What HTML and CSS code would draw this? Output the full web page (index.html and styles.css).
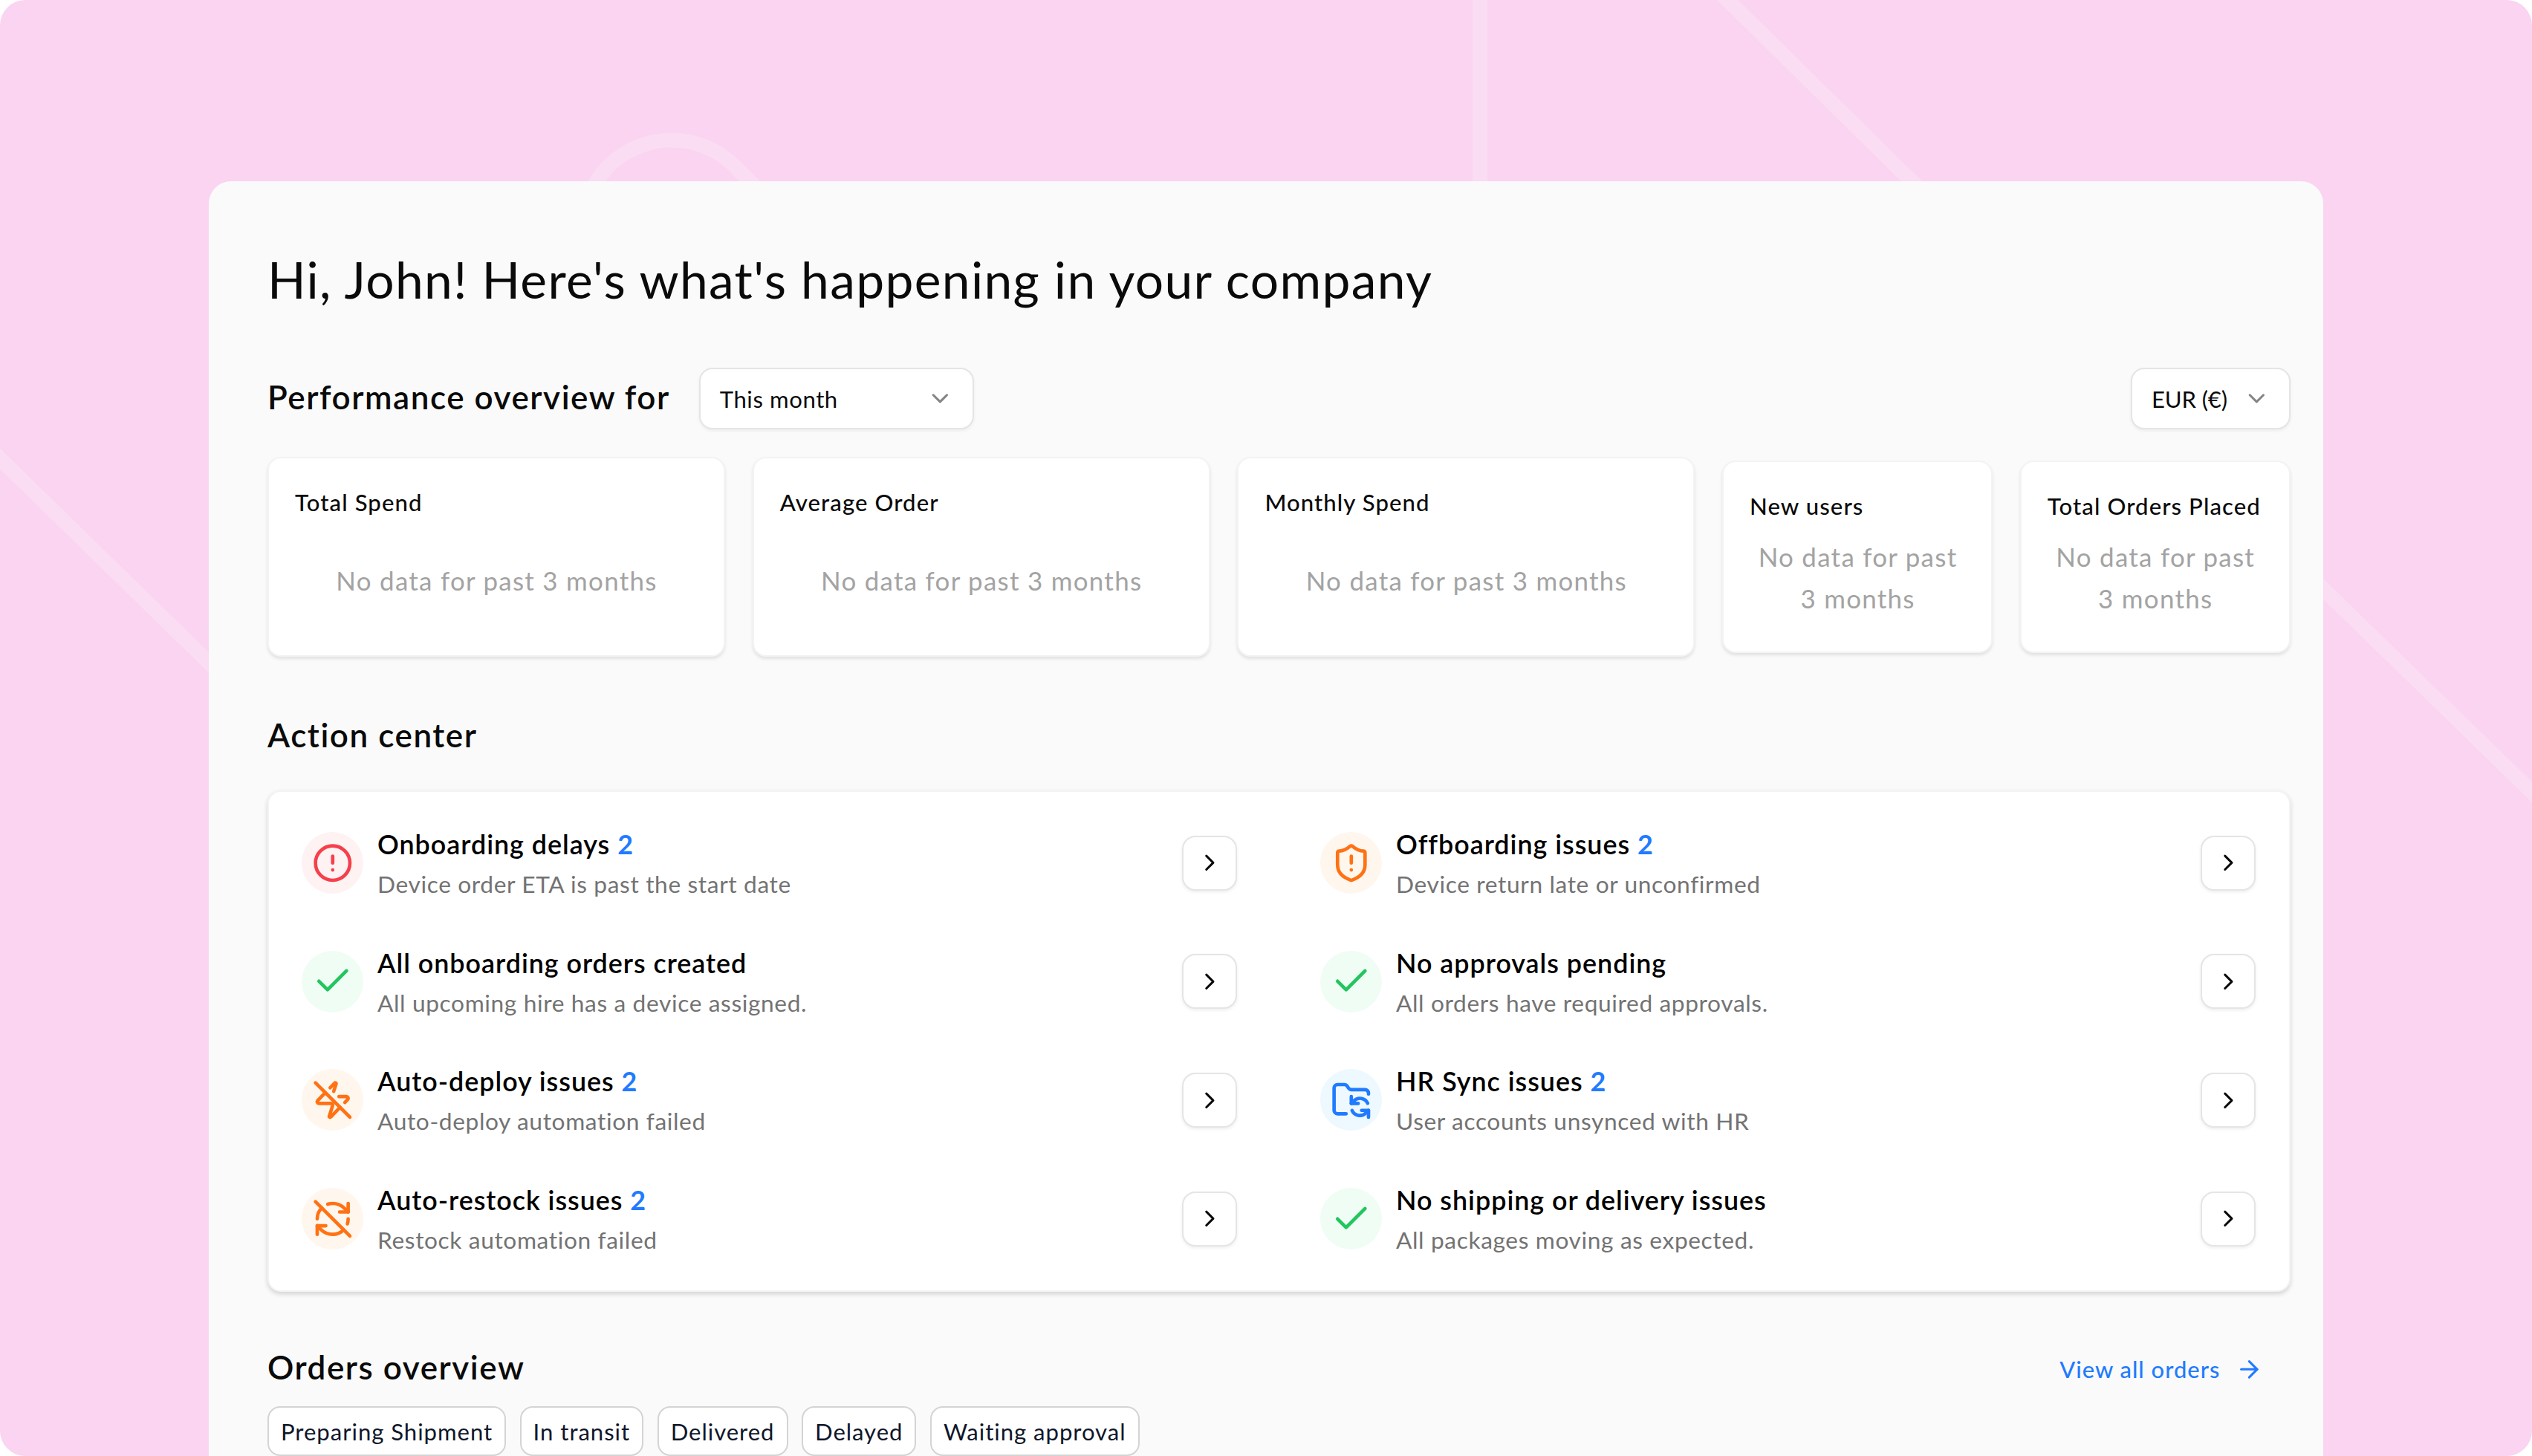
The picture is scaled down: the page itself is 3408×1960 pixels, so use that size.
FILE: index.html
```
<!DOCTYPE html>
<html lang="en">
<head>
  <meta charset="UTF-8">
  <meta name="viewport" content="width=device-width, initial-scale=1.0">
  <title>Company overview</title>
  <link rel="stylesheet" href="styles.css">
</head>
<body>

<!-- shared icons -->
<svg class="sprite" xmlns="http://www.w3.org/2000/svg">
  <symbol id="chevron-down" viewBox="0 0 24 24"><path d="m6 9 6 6 6-6"/></symbol>
  <symbol id="chevron-right" viewBox="0 0 24 24"><path d="m9 18 6-6-6-6"/></symbol>
  <symbol id="arrow-right" viewBox="0 0 24 24"><path d="M5 12h14"/><path d="m12 5 7 7-7 7"/></symbol>
  <symbol id="check" viewBox="0 0 24 24"><path d="M20 6 9 17l-5-5"/></symbol>
  <symbol id="alert" viewBox="0 0 24 24"><circle cx="12" cy="12" r="10"/><path d="M12 8v4"/><path d="M12 16h.01"/></symbol>
  <symbol id="shield" viewBox="0 0 24 24"><path d="M20 13c0 5-3.5 7.5-7.66 8.95a1 1 0 0 1-.67-.01C7.5 20.5 4 18 4 13V6a1 1 0 0 1 1-1c2 0 4.5-1.2 6.24-2.72a1.17 1.17 0 0 1 1.52 0C14.51 3.81 17 5 19 5a1 1 0 0 1 1 1z"/><path d="M12 8v4"/><path d="M12 16h.01"/></symbol>
  <symbol id="zap-off" viewBox="0 0 24 24"><path d="M10.513 4.856 13.12 2.17a.5.5 0 0 1 .86.46l-1.377 4.317"/><path d="M15.656 10H20a1 1 0 0 1 .78 1.63l-1.72 1.773"/><path d="M16.273 16.273 10.88 21.83a.5.5 0 0 1-.86-.46l1.92-6.02A1 1 0 0 0 11 14H4a1 1 0 0 1-.78-1.63l4.507-4.643"/><path d="m2 2 20 20"/></symbol>
  <symbol id="refresh-off" viewBox="0 0 24 24"><path d="M21 8 18.74 5.74A9.75 9.75 0 0 0 12 3C11 3 10.03 3.16 9.13 3.47"/><path d="M8 16H3v5"/><path d="M3 12C3 9.51 4 7.26 5.64 5.64"/><path d="m3 16 2.26 2.26A9.75 9.75 0 0 0 12 21c2.49 0 4.74-1 6.36-2.64"/><path d="M21 12c0 1-.16 1.97-.47 2.87"/><path d="M21 3v5h-5"/><path d="M22 22 2 2"/></symbol>
  <symbol id="folder-sync" viewBox="0 0 24 24"><path d="M9 20H4a2 2 0 0 1-2-2V5a2 2 0 0 1 2-2h3.9a2 2 0 0 1 1.69.9l.81 1.2a2 2 0 0 0 1.67.9H20a2 2 0 0 1 2 2v.5"/><path d="M12 10v4h4"/><path d="m12 14 1.535-1.605a5 5 0 0 1 8 1.5"/><path d="M22 22v-4h-4"/><path d="m22 18-1.535 1.605a5 5 0 0 1-8-1.5"/></symbol>
</svg>

<div class="page">
  <svg class="lines" viewBox="0 0 3408 1960">
    <path d="M-20 598 400 1008"/>
    <path d="M1992 -20V300"/>
    <path d="M2305 -20 2650 320"/>
    <path d="M3100 766.500 3420 1078"/>
    <path d="M784 309A120 120 0 0 1 989 224L1060 295"/>
  </svg>

  <main class="panel">
    <h1>Hi, John! Here's what's happening in your company</h1>

    <div class="overview-head">
      <h2>Performance overview for</h2>
      <button class="select period">This month <svg class="icon"><use href="#chevron-down"/></svg></button>
      <button class="select currency">EUR (€) <svg class="icon"><use href="#chevron-down"/></svg></button>
    </div>

    <section class="stats">
      <div class="stat"><h3>Total Spend</h3><p>No data for past 3 months</p></div>
      <div class="stat"><h3>Average Order</h3><p>No data for past 3 months</p></div>
      <div class="stat"><h3>Monthly Spend</h3><p>No data for past 3 months</p></div>
      <div class="stat small"><h3>New users</h3><p>No data for past<br>3 months</p></div>
      <div class="stat small"><h3>Total Orders Placed</h3><p>No data for past<br>3 months</p></div>
    </section>

    <h2 class="action-title">Action center</h2>
    <section class="actions">
      <div class="action">
        <span class="badge red"><svg class="icon"><use href="#alert"/></svg></span>
        <div class="text"><h4>Onboarding delays <b>2</b></h4><p>Device order ETA is past the start date</p></div>
        <button class="go"><svg class="icon"><use href="#chevron-right"/></svg></button>
      </div>
      <div class="action">
        <span class="badge orange"><svg class="icon"><use href="#shield"/></svg></span>
        <div class="text"><h4>Offboarding issues <b>2</b></h4><p>Device return late or unconfirmed</p></div>
        <button class="go"><svg class="icon"><use href="#chevron-right"/></svg></button>
      </div>
      <div class="action">
        <span class="badge green"><svg class="icon"><use href="#check"/></svg></span>
        <div class="text"><h4>All onboarding orders created</h4><p>All upcoming hire has a device assigned.</p></div>
        <button class="go"><svg class="icon"><use href="#chevron-right"/></svg></button>
      </div>
      <div class="action">
        <span class="badge green"><svg class="icon"><use href="#check"/></svg></span>
        <div class="text"><h4>No approvals pending</h4><p>All orders have required approvals.</p></div>
        <button class="go"><svg class="icon"><use href="#chevron-right"/></svg></button>
      </div>
      <div class="action">
        <span class="badge orange"><svg class="icon"><use href="#zap-off"/></svg></span>
        <div class="text"><h4>Auto-deploy issues <b>2</b></h4><p>Auto-deploy automation failed</p></div>
        <button class="go"><svg class="icon"><use href="#chevron-right"/></svg></button>
      </div>
      <div class="action">
        <span class="badge blue"><svg class="icon"><use href="#folder-sync"/></svg></span>
        <div class="text"><h4>HR Sync issues <b>2</b></h4><p>User accounts unsynced with HR</p></div>
        <button class="go"><svg class="icon"><use href="#chevron-right"/></svg></button>
      </div>
      <div class="action">
        <span class="badge orange"><svg class="icon"><use href="#refresh-off"/></svg></span>
        <div class="text"><h4>Auto-restock issues <b>2</b></h4><p>Restock automation failed</p></div>
        <button class="go"><svg class="icon"><use href="#chevron-right"/></svg></button>
      </div>
      <div class="action">
        <span class="badge green"><svg class="icon"><use href="#check"/></svg></span>
        <div class="text"><h4>No shipping or delivery issues</h4><p>All packages moving as expected.</p></div>
        <button class="go"><svg class="icon"><use href="#chevron-right"/></svg></button>
      </div>
    </section>

    <div class="orders-head">
      <h2>Orders overview</h2>
      <a class="view-all">View all orders <svg class="icon"><use href="#arrow-right"/></svg></a>
    </div>
    <div class="tags">
      <span class="tag">Preparing Shipment</span>
      <span class="tag">In transit</span>
      <span class="tag">Delivered</span>
      <span class="tag">Delayed</span>
      <span class="tag">Waiting approval</span>
    </div>
  </main>
</div>

</body>
</html>
```
FILE: styles.css
```
* { box-sizing: border-box; margin: 0; padding: 0; }
body { background: #fff; font-family: Lato, "Open Sans", sans-serif; color: #0a0a0a; overflow: hidden; }
button { font-family: inherit; color: inherit; background: #fff; }
.sprite { display: none; }
.icon { width: 36.7px; height: 36.7px; fill: none; stroke: currentColor; stroke-width: 2; stroke-linecap: round; stroke-linejoin: round; flex: none; }

.page { width: 3408px; height: 1960px; padding: 244px 281px 0; background: #fad4f1; border-radius: 34px; overflow: hidden; position: relative; }
.lines { position: absolute; top: 0; left: 0; width: 3408px; height: 1960px; fill: none; stroke: #fadcf3; stroke-width: 20; }
.panel { position: relative; height: 1716px; padding: 92px 44px 0 79px; background: #fafafa; border-radius: 30px 30px 0 0; }

h1 { font-size: 67.7px; font-weight: 400; line-height: 80px; letter-spacing: 0.0198em; }
h2 { font-size: 44px; font-weight: 600; line-height: 54px; letter-spacing: 0.035em; }

.overview-head { display: flex; align-items: center; margin-top: 79px; height: 83px; }
.overview-head h2 { padding-bottom: 6px; }
.select { display: flex; align-items: center; justify-content: space-between; height: 83px; padding: 0 25px 0 26px; border: 2px solid #e5e5e5; border-radius: 18px; box-shadow: 0 2px 4px rgba(0, 0, 0, 0.06); font-size: 31.1px; letter-spacing: 0.019em; }
.select .icon { color: #858585; }
.period { width: 370px; margin-left: 39px; }
.currency { width: 215px; margin-left: auto; letter-spacing: -0.005em; }

.stats { display: grid; grid-template-columns: 616px 616px 616px 364px 364px; gap: 36.7px; align-items: center; margin-top: 37px; height: 269px; }
.stat { height: 269px; display: flex; flex-direction: column; padding: 36px 34px 33px 35px; background: #fff; border: 2px solid #f3f3f3; border-radius: 18px; box-shadow: 0 3px 4px rgba(0, 0, 0, 0.1); }
.stat h3 { font-size: 31.1px; font-weight: 500; line-height: 46px; letter-spacing: 0.035em; white-space: nowrap; }
.stat p { margin: auto 0; padding-top: 16px; font-size: 34.9px; line-height: 56px; letter-spacing: 0.037em; text-align: center; color: #a3a3a3; }
.stat.small { height: 259px; }
.stat.small p { margin: 0; padding-top: 18px; }

.action-title { margin: 78px 0 48px; }
.actions { height: 675px; display: grid; grid-template-columns: 1259px 1259px; grid-auto-rows: 83px; column-gap: 112px; row-gap: 76.7px; padding: 54px 0 0 44px; background: #fff; border: 2px solid #f3f3f3; border-radius: 18px; box-shadow: 0 3px 6px rgba(0, 0, 0, 0.16); }
.action { display: flex; align-items: center; }
.badge { width: 83px; height: 83px; border-radius: 50%; display: flex; align-items: center; justify-content: center; }
.badge .icon { width: 55.6px; height: 55.6px; }
.red { color: #f5404c; background: #fef2f2; }
.orange { color: #ff7214; background: #fff6ed; }
.green { color: #22c55e; background: #f0fdf4; }
.blue { color: #217bff; background: #edf8ff; }
.text { flex: 1; padding: 4px 0 0 19px; }
.text h4 { font-size: 35.9px; font-weight: 600; line-height: 54px; letter-spacing: 0.027em; color: #000; }
.text h4 b { font-weight: 700; color: #217bff; }
.text p { font-size: 31.7px; line-height: 53px; letter-spacing: 0.0195em; color: #737373; }
.go { width: 74px; height: 74px; display: flex; align-items: center; justify-content: center; border: 2px solid #e5e5e5; border-radius: 18px; box-shadow: 0 2px 4px rgba(0, 0, 0, 0.07); }

.orders-head { display: flex; align-items: center; justify-content: space-between; margin-top: 74px; height: 54px; }
.view-all { display: flex; align-items: center; gap: 21px; margin-right: 37px; padding-top: 6px; font-size: 30.8px; font-weight: 500; letter-spacing: 0.034em; color: #217bff; }
.tags { display: flex; gap: 18.5px; margin-top: 26px; }
.tag { height: 67px; padding: 0 16px; border: 2px solid #d4d4d4; border-radius: 17px; background: #fff; font-size: 31.1px; line-height: 64px; letter-spacing: 0.031em; color: #0f172a; }
```
